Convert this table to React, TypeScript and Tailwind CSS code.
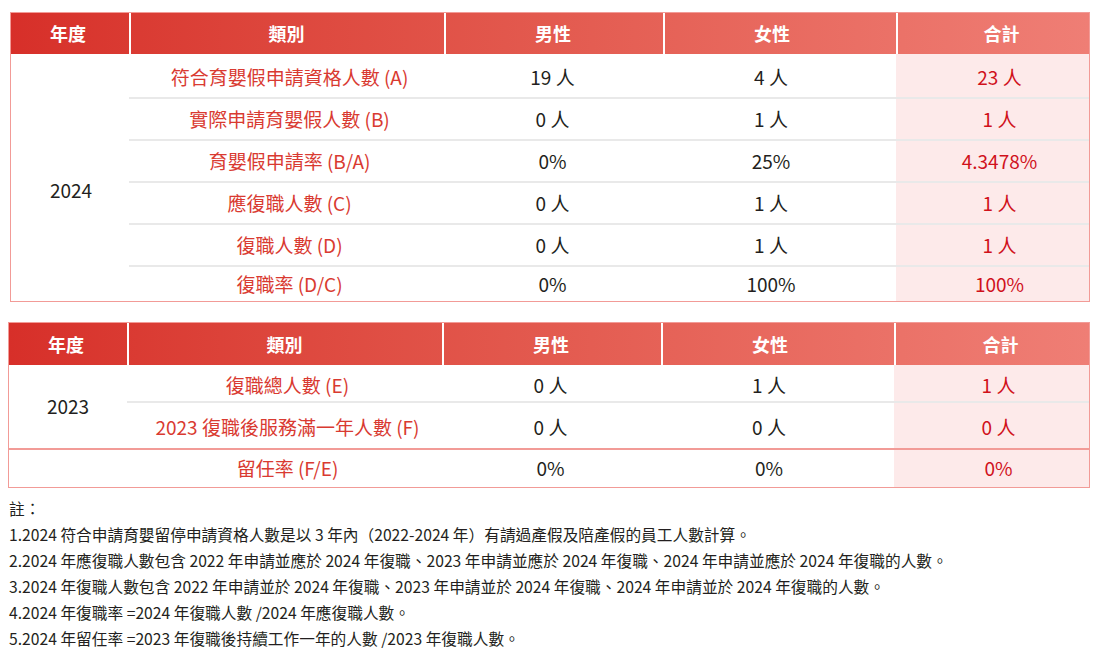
const font = { fontFamily: "'Noto Sans CJK TC', 'Noto Sans', sans-serif" };

const cols = "grid grid-cols-[118px_315px_219px_233px_1fr]";

type Row = { label: string; male: string; female: string; total: string; h: string };

const rows2024: Row[] = [
  { label: "符合育嬰假申請資格人數 (A)", male: "19 人", female: "4 人", total: "23 人", h: "h-[43px] pt-[4px]" },
  { label: "實際申請育嬰假人數 (B)", male: "0 人", female: "1 人", total: "1 人", h: "h-[40px]" },
  { label: "育嬰假申請率 (B/A)", male: "0%", female: "25%", total: "4.3478%", h: "h-[40px]" },
  { label: "應復職人數 (C)", male: "0 人", female: "1 人", total: "1 人", h: "h-[40px]" },
  { label: "復職人數 (D)", male: "0 人", female: "1 人", total: "1 人", h: "h-[40px]" },
  { label: "復職率 (D/C)", male: "0%", female: "100%", total: "100%", h: "h-[34px]" },
];

function Header({ h }: { h: string }) {
  const cell = `flex items-center justify-center text-white font-bold text-[18px] ${h}`;
  return (
    <div className={`${cols} bg-linear-to-r from-[#d72f29] via-[#e35a4f] to-[#ef7e75]`}>
      <div className={`${cell} pr-[4px]`}>年度</div>
      <div className={`${cell} border-l-2 border-white pr-[2px]`}>類別</div>
      <div className={`${cell} border-l-2 border-white pr-[3px]`}>男性</div>
      <div className={`${cell} border-l-2 border-white pr-[17px]`}>女性</div>
      <div className={`${cell} border-l-2 border-white pl-[16px]`}>合計</div>
    </div>
  );
}

function BodyRow({ r, first }: { r: Row; first?: boolean }) {
  const line = first ? "" : "border-t-2 border-[#e9e9e9]";
  return (
    <div className={`col-span-4 grid grid-cols-[315px_219px_233px_1fr] ${line}`}>
      <div className={`flex items-center justify-center pl-[6px] text-[19px] text-[#d93a31] ${r.h}`}>{r.label}</div>
      <div className={`flex items-center justify-center pr-[2px] text-[19px] text-[#231f20] ${r.h}`}>{r.male}</div>
      <div className={`flex items-center justify-center pr-[17px] text-[19px] text-[#231f20] ${r.h}`}>{r.female}</div>
      <div className={`flex items-center justify-center pl-[14px] text-[19px] text-[#d0111b] bg-[#fdeaea] ${r.h}`}>{r.total}</div>
    </div>
  );
}

export default function App() {
  return (
    <div className="w-[1100px] h-[665px] bg-white pt-3 overflow-hidden" style={font}>
      <div className="ml-[10px] w-[1080px] border border-[#f29b97]">
        <Header h="h-[41px]" />
        <div className={cols}>
          <div className="row-span-6 flex items-center justify-center pt-[26px] pl-[2px] text-[19px] text-[#231f20]">2024</div>
          {rows2024.map((r, i) => (
            <BodyRow key={r.label} r={r} first={i === 0} />
          ))}
        </div>
      </div>

      <div className="ml-2 mt-5 w-[1082px] border border-[#f29b97]">
        <Header h="h-[42px]" />
        <div className={cols}>
          <div className="row-span-2 flex items-center justify-center text-[19px] text-[#231f20]">2023</div>
          <BodyRow first r={{ label: "復職總人數 (E)", male: "0 人", female: "1 人", total: "1 人", h: "h-[36px] pt-[4px]" }} />
          <BodyRow r={{ label: "2023 復職後服務滿一年人數 (F)", male: "0 人", female: "0 人", total: "0 人", h: "h-[45px] pt-[4px]" }} />
        </div>
        <div className={`${cols} border-t-2 border-[#f29b97]`}>
          <div className="h-[37px]" />
          <BodyRow first r={{ label: "留任率 (F/E)", male: "0%", female: "0%", total: "0%", h: "h-[37px]" }} />
        </div>
      </div>

      <div className="ml-[9px] mt-2 text-[15.7px] leading-[26px] text-[#231f20]">
        <p>註：</p>
        <p>1.2024 符合申請育嬰留停申請資格人數是以 3 年內（2022-2024 年）有請過產假及陪產假的員工人數計算。</p>
        <p>2.2024 年應復職人數包含 2022 年申請並應於 2024 年復職、2023 年申請並應於 2024 年復職、2024 年申請並應於 2024 年復職的人數。</p>
        <p>3.2024 年復職人數包含 2022 年申請並於 2024 年復職、2023 年申請並於 2024 年復職、2024 年申請並於 2024 年復職的人數。</p>
        <p>4.2024 年復職率 =2024 年復職人數 /2024 年應復職人數。</p>
        <p>5.2024 年留任率 =2023 年復職後持續工作一年的人數 /2023 年復職人數。</p>
      </div>
    </div>
  );
}
